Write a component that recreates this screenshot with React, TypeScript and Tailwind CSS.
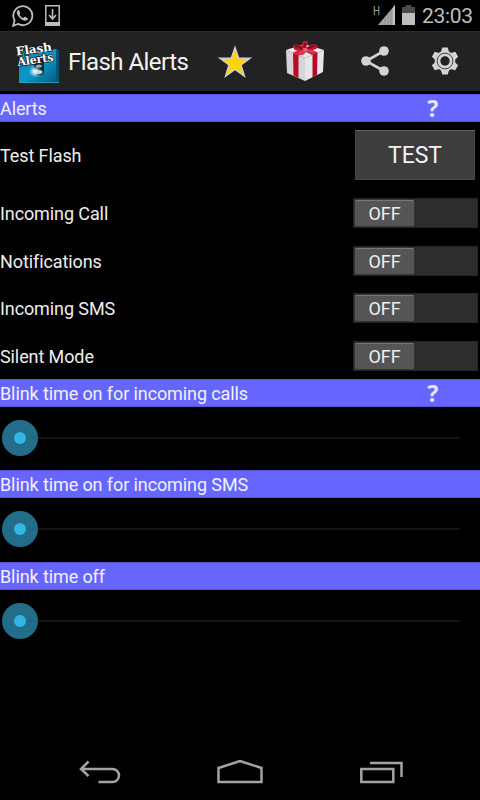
// Flash Alerts: main settings screen

interface SectionHeaderProps {
  title: string
  help?: boolean
}

const TOGGLES = ['Incoming Call', 'Notifications', 'Incoming SMS', 'Silent Mode']

function StatusBar() {
  return (
    <div className="flex h-[31px] shrink-0 items-start justify-between bg-black pl-[11px] pr-[7px] text-[#bebebe]">
      <div className="flex gap-[11px] pt-1">
        {/* chat notification */}
        <svg width="23" height="24" viewBox="0 0 23 24" fill="none">
          <path d="M2.1 21.8 3.6 16.4A9.5 9.5 0 1 1 7.1 19.9L2.1 21.8Z" stroke="currentColor" strokeWidth="1.8" />
          <path
            d="M8 6.2c-.5-.5-1.1-.2-1.5.3-1.5 1.7-.5 4.3 1.8 6.8 2.6 2.8 5.3 4.1 7.4 3 .9-.5 1.3-1.3 1.1-2.1l-2.7-1.4c-.6-.2-.9.2-1.5 1-.3.4-.9.2-2-.5-1-.7-1.8-1.6-2.2-2.5.5-.7 1-1.2.8-1.8L8 6.2Z"
            fill="currentColor"
          />
        </svg>
        {/* download notification */}
        <svg width="15" height="22" viewBox="0 0 15 22" fill="none" className="mt-px">
          <path d="M.8.8h13.4v19.4H.8z" stroke="currentColor" strokeWidth="1.5" />
          <path d="M.5 17h14v4H.5z" fill="currentColor" />
          <path d="M7.5 4v9M4 10l3.5 4 3.5-4" stroke="currentColor" strokeWidth="1.6" />
        </svg>
      </div>
      <div className="flex">
        <span className="mt-[4px] w-[5px] origin-left scale-x-[.82] text-[12px] leading-[14px] text-[#aaa] opacity-95">H</span>
        <svg width="17" height="20" viewBox="0 0 17 20" className="mt-[5px]">
          <path d="M0 20 17 0V20Z" fill="#a8a8a8" />
          <path d="M4 15.3V20M7 11.8V20M10 8.2V20M13 4.7V20" stroke="#888" strokeWidth=".8" />
          <path d="M15 2.4 17 0V20H15Z" fill="#c4c4c4" />
        </svg>
        <svg width="13" height="20" viewBox="0 0 13 20" className="ml-[7px] mt-[5px]">
          <path d="M3.5 0h6v2H13v6H0V2h3.5z" fill="#4b4b4b" />
          <path d="M0 8h13v12H0z" fill="#bebebe" />
        </svg>
        <span className="ml-[7px] mt-[3px] w-[51px] whitespace-nowrap text-[21px] leading-[26px] tracking-[-0.3px]">23:03</span>
      </div>
    </div>
  )
}

function AppIcon() {
  return (
    <svg width="46" height="48" viewBox="0 -3 46 48" className="shrink-0">
      <defs>
        <linearGradient id="case" x1="0" y1="0" x2="1" y2="1">
          <stop offset="0" stopColor="#0b83b0" />
          <stop offset=".5" stopColor="#0898c8" />
          <stop offset="1" stopColor="#075578" />
        </linearGradient>
        <radialGradient id="glow">
          <stop offset="0" stopColor="#fff" />
          <stop offset=".35" stopColor="#c9eaf6" stopOpacity=".9" />
          <stop offset="1" stopColor="#5fc4e8" stopOpacity="0" />
        </radialGradient>
      </defs>
      <path d="M5 10 42 8 45 10V42H5z" fill="url(#case)" />
      <path d="M42 9h3v33h-3z" fill="#075577" />
      <path d="M5 41.5h40" stroke="#2fa3c6" strokeWidth=".8" />
      <rect x="20" y="17" width="10" height="17" rx="4" fill="#10242e" />
      <ellipse cx="25" cy="25" rx="3" ry="1.6" fill="#9aabb2" />
      <ellipse cx="25" cy="31" rx="3.500" ry="2" fill="#d5d5cd" />
      <circle cx="21" cy="30.500" r="6.500" fill="url(#glow)" />
      <g
        fill="#fff"
        stroke="#172027"
        strokeWidth="1.6"
        paintOrder="stroke"
        fontFamily="'DejaVu Serif', serif"
        fontWeight="700"
        fontSize="11.5"
      >
        <text x="2.500" y="14.500" textLength="36" lengthAdjust="spacingAndGlyphs" transform="rotate(-8 2.5 14.5)">Flash</text>
        <text x="4" y="25" textLength="36" lengthAdjust="spacingAndGlyphs" transform="rotate(-8 4 25)">Alerts</text>
      </g>
    </svg>
  )
}

function GiftIcon() {
  return (
    <svg width="42" height="42" viewBox="0 0 42 42">
      <path d="M2 10 20 4 40 10 21 18z" fill="#e9e9ea" />
      <path d="M2 10 21 18V41L3 33z" fill="#d5d5d8" />
      <path d="M21 18 40 10 39 32 21 41z" fill="#e6e6e8" />
      <path d="M9 13 14.500 15.500V38L9.500 35.500z" fill="#bd0928" />
      <path d="M28.500 15 33.500 12.500 33 35 28.500 37.500z" fill="#b70a28" />
      <path d="M8.500 12.800 26 6 32 8 14.500 15.500z" fill="#cf2640" />
      <path d="M12 7 17 5 33.500 12.500 28.500 15z" fill="#bd0b2a" />
      <path d="M20 10C13 12 9 10 9 6 10 3 16 5 20 9 16 3 19 0 23 1 26 3 22 7 21 9 27 3 33 3 34 7 33 10 25 11 21 10Z" fill="#c51431" />
      <path d="M20 10C15 10 13 13 16 15 20 16 22 13 21 10 26 12 29 15 31 13 31 10 25 9 21 9Z" fill="#de3952" />
      <path d="M11 6Q15 6 18 9M21 3Q21 6 20 8M31 6Q27 6 23 9" stroke="#7d081b" strokeWidth="1.300" fill="none" />
      <path d="M19 8 23 8 24 11 20 12z" fill="#e76275" />
    </svg>
  )
}

function ActionBar() {
  return (
    <div className="flex h-[60px] shrink-0 items-center border-t border-[#2c2c2c] bg-[#222] pl-[14px]">
      <AppIcon />
      <h1 className="ml-2 w-[132px] whitespace-nowrap text-[24px] leading-8 tracking-[-0.55px] text-[#f3f3f3]">
        Flash Alerts
      </h1>
      <div className="flex w-[70px] justify-center">
        <svg width="36" height="36" viewBox="0 0 36 36">
          <path
            d="m18 3.500 3.700 10.800h11.300l-9 6.700 3.400 11.200-9.400-6.700-9.400 6.700L12 21l-9-6.700h11.300z"
            fill="#ffd500"
            stroke="#cfcfcf"
            strokeWidth="1.500"
          />
        </svg>
      </div>
      <div className="flex w-[70px] justify-center pb-[2px]">
        <GiftIcon />
      </div>
      <div className="flex w-[70px] justify-center pb-px">
        <svg width="30" height="30" viewBox="0 0 30 30" fill="#d3d3d3">
          <path d="M24 5 6 15l18 10" fill="none" stroke="#d3d3d3" strokeWidth="2.600" />
          <circle cx="24" cy="5" r="4.800" />
          <circle cx="6" cy="15" r="4.800" />
          <circle cx="24" cy="25" r="4.800" />
        </svg>
      </div>
      <div className="flex w-[70px] justify-center pb-px">
        <svg width="28" height="28" viewBox="-14 -14 28 28">
          <g fill="#d3d3d3">
            <circle r="10.300" />
            <path d="M-4-9-2.800-13.500h5.600L4-9V9L2.800 13.500h-5.600L-4 9z" />
            <path d="M-4-9-2.800-13.500h5.600L4-9V9L2.800 13.500h-5.600L-4 9z" transform="rotate(60)" />
            <path d="M-4-9-2.800-13.500h5.600L4-9V9L2.800 13.500h-5.600L-4 9z" transform="rotate(120)" />
          </g>
          <circle r="7.900" fill="none" stroke="#333" strokeWidth=".9" />
          <circle r="4.700" fill="#222" />
        </svg>
      </div>
    </div>
  )
}

function SectionHeader({ title, help = false }: SectionHeaderProps) {
  return (
    <div className="flex h-[28px] shrink-0 items-center justify-between border-y border-[#5656d8] bg-[#6666ff] pr-[42px] text-[#f1f1ff]">
      <h2 className="whitespace-nowrap pt-px leading-6">{title}</h2>
      {help && (
        <button className="pb-px font-['Noto_Sans',sans-serif] text-[23px] font-bold leading-6 text-[#e5e5ff]">?</button>
      )}
    </div>
  )
}

function ToggleRow({ label }: { label: string }) {
  return (
    <div className="flex h-[47.500px] items-center justify-between pr-[2px]">
      <span className="pt-px">{label}</span>
      <button className="flex h-[30px] w-[125px] border border-[#242424] bg-[#2d2d2d] p-px text-left">
        <span className="h-[26px] w-[59px] rounded-[2px] border-t border-[#777] bg-[#555] text-center leading-[26px] text-[#eee] shadow-[0_0_1px_#777]">
          OFF
        </span>
      </button>
    </div>
  )
}

function BlinkSlider() {
  return (
    <div className="flex h-[63px] shrink-0 items-center pb-px pl-[2px] pr-[20px]">
      <svg width="36" height="36" viewBox="0 0 36 36" className="shrink-0">
        <circle cx="18" cy="18" r="18" fill="#216d8a" />
        <path d="M18 18h18" stroke="#2b637a" />
        <circle cx="18" cy="18" r="6" fill="#33b5e5" />
      </svg>
      <div className="h-[2px] flex-1 bg-[#141414]" />
    </div>
  )
}

function NavBar() {
  return (
    <nav className="mt-auto flex h-[51px] shrink-0 items-center justify-center gap-[94px] text-[#a3a3a3]">
      <svg width="46" height="30" viewBox="0 0 46 30" fill="none" stroke="currentColor" strokeWidth="2.500">
        <path d="M11.500 1.500 4 9l7.500 7M3.500 9h32a6.500 6.500 0 0 1 0 13H21.500" />
      </svg>
      <svg width="46" height="30" viewBox="0 0 46 30" fill="none" stroke="currentColor" strokeWidth="2.500">
        <path d="M1.500 22V8L23 1l21.500 7V22z" />
      </svg>
      <svg width="46" height="30" viewBox="0 0 46 30" fill="none" stroke="currentColor" strokeWidth="2.500">
        <path d="M4.300 9h32v13h-32zM13 3h31.500v14" />
      </svg>
    </nav>
  )
}

export default function App() {
  return (
    <div className="flex h-[800px] w-[480px] flex-col overflow-hidden bg-black font-['Roboto',sans-serif] text-[18px] tracking-[-0.1px] text-[#eee]">
      <StatusBar />
      <ActionBar />
      <main className="flex flex-col pt-[3px]">
        <SectionHeader title="Alerts" help />
        <div className="flex h-[67px] items-center justify-between pb-px pr-[5px]">
          <span>Test Flash</span>
          <button className="h-[50px] w-[120px] rounded-[1px] border border-[#484848] border-t-[#626262] bg-[#3d3d3d] pt-[3px] text-[23px] text-[#f3f3f3]">
            TEST
          </button>
        </div>
        <div className="relative top-[.3px]">
          {TOGGLES.map(label => (
            <ToggleRow key={label} label={label} />
          ))}
        </div>
        <SectionHeader title="Blink time on for incoming calls" help />
        <BlinkSlider />
        <SectionHeader title="Blink time on for incoming SMS" />
        <BlinkSlider />
        <div className="pt-px">
          <SectionHeader title="Blink time off" />
          <BlinkSlider />
        </div>
      </main>
      <NavBar />
    </div>
  )
}
